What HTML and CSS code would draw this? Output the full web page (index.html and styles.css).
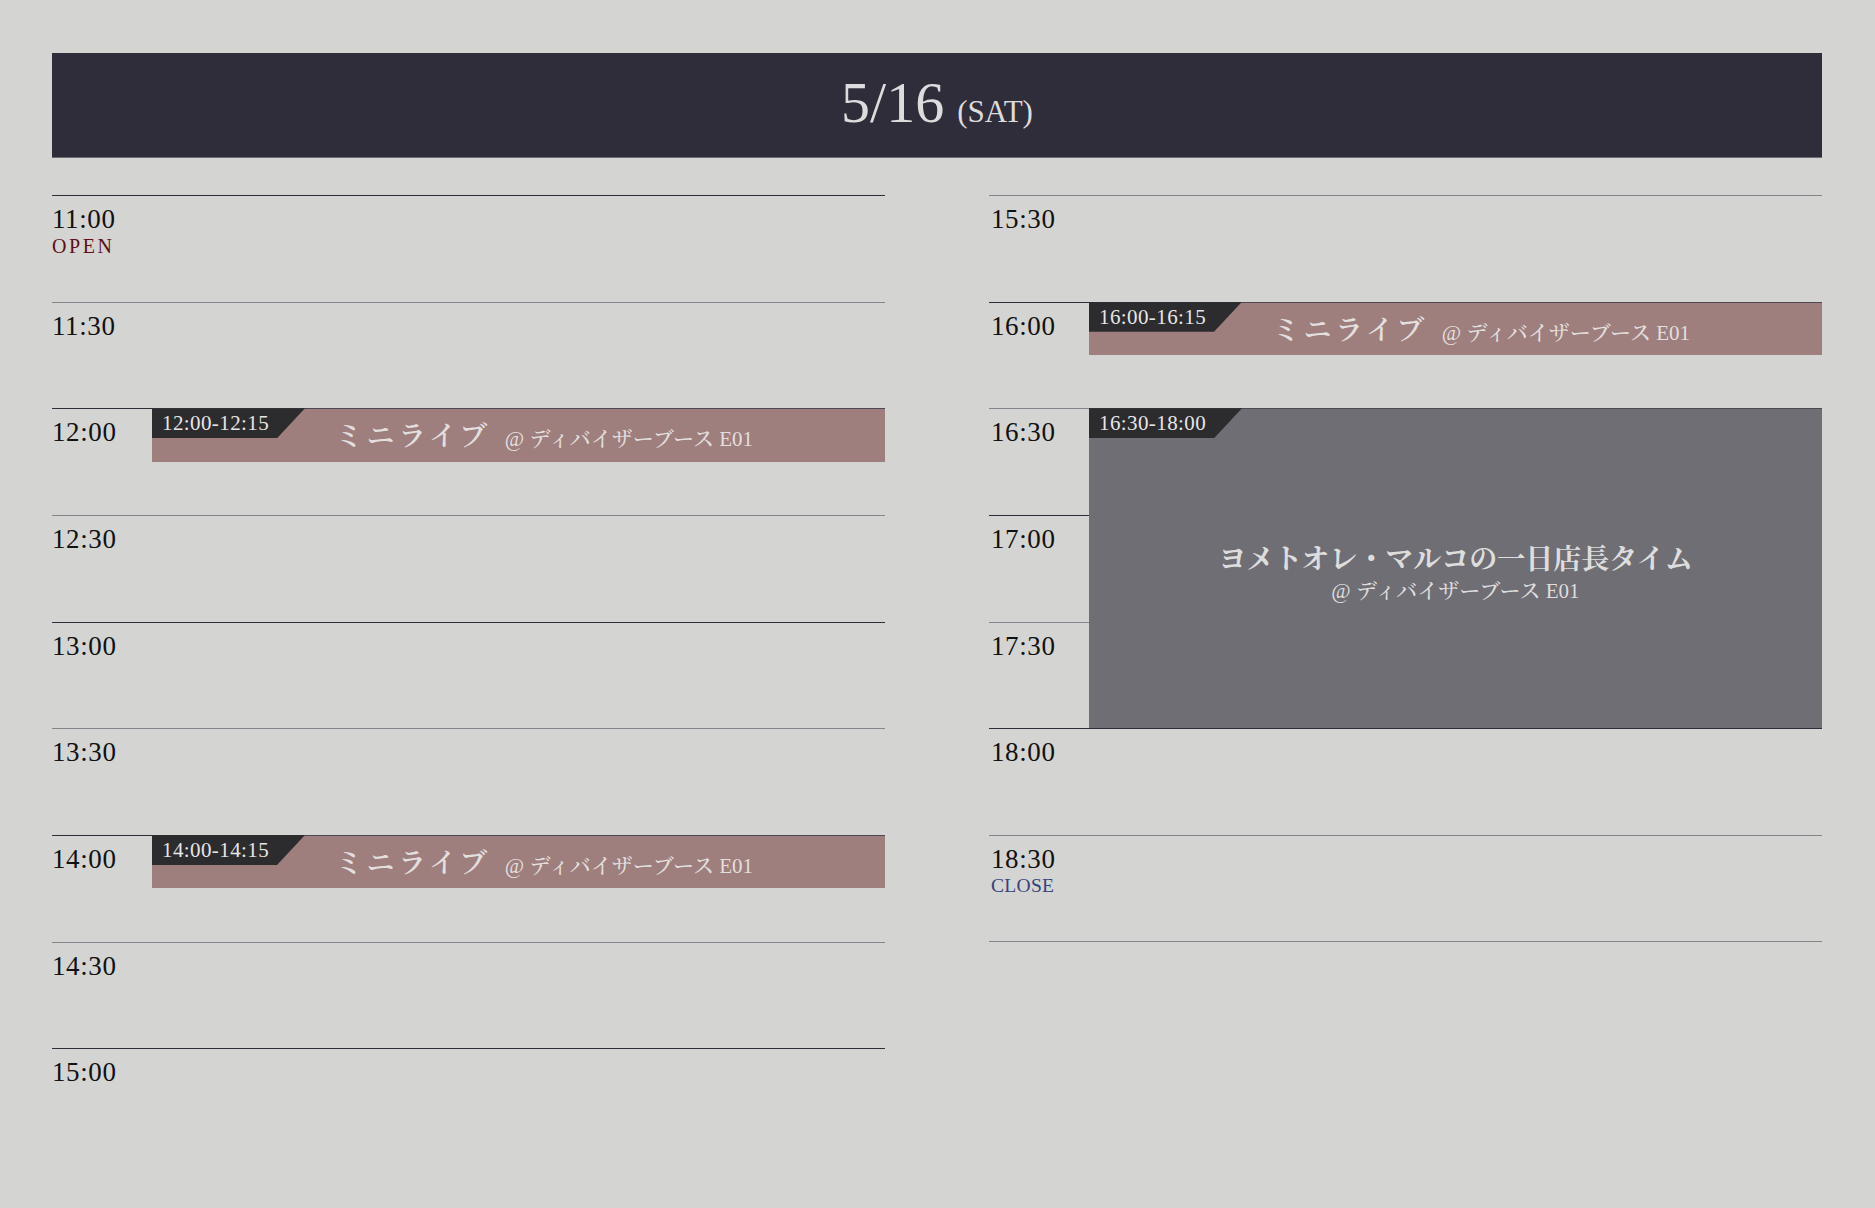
FILE: index.html
```html
<!DOCTYPE html>
<html lang="ja">
<head>
  <meta charset="UTF-8" />
  <meta name="viewport" content="width=device-width, initial-scale=1.0" />
  <title>5/16 タイムテーブル</title>
  <link rel="stylesheet" href="styles.css">
</head>
<body>
  <div class="page">
    <!-- Day header -->
    <header class="day-head">
      <span class="day-date">5/16</span><span class="day-week">(SAT)</span>
    </header>

    <div class="timetable">
      <!-- Left column: 11:00 - 15:00 -->
      <section class="col">
        <div class="slot hour">
          <div class="slot-label"><div class="slot-time">11:00</div><div class="slot-note open">OPEN</div></div>
          <div class="slot-lane"></div>
        </div>
        <div class="slot half">
          <div class="slot-label"><div class="slot-time">11:30</div></div>
          <div class="slot-lane"></div>
        </div>
        <div class="slot hour">
          <div class="slot-label"><div class="slot-time">12:00</div></div>
          <div class="slot-lane">
            <div class="event live">
              <div class="event-tag">12:00-12:15</div>
              <div class="event-body"><span class="event-title">ミニライブ</span><span class="event-place">@ ディバイザーブース E01</span></div>
            </div>
          </div>
        </div>
        <div class="slot half">
          <div class="slot-label"><div class="slot-time">12:30</div></div>
          <div class="slot-lane"></div>
        </div>
        <div class="slot hour">
          <div class="slot-label"><div class="slot-time">13:00</div></div>
          <div class="slot-lane"></div>
        </div>
        <div class="slot half">
          <div class="slot-label"><div class="slot-time">13:30</div></div>
          <div class="slot-lane"></div>
        </div>
        <div class="slot hour">
          <div class="slot-label"><div class="slot-time">14:00</div></div>
          <div class="slot-lane">
            <div class="event live">
              <div class="event-tag">14:00-14:15</div>
              <div class="event-body"><span class="event-title">ミニライブ</span><span class="event-place">@ ディバイザーブース E01</span></div>
            </div>
          </div>
        </div>
        <div class="slot half">
          <div class="slot-label"><div class="slot-time">14:30</div></div>
          <div class="slot-lane"></div>
        </div>
        <div class="slot hour">
          <div class="slot-label"><div class="slot-time">15:00</div></div>
          <div class="slot-lane"></div>
        </div>
      </section>

      <!-- Right column: 15:30 - 18:30 -->
      <section class="col">
        <div class="slot half">
          <div class="slot-label"><div class="slot-time">15:30</div></div>
          <div class="slot-lane"></div>
        </div>
        <div class="slot hour">
          <div class="slot-label"><div class="slot-time">16:00</div></div>
          <div class="slot-lane">
            <div class="event live">
              <div class="event-tag">16:00-16:15</div>
              <div class="event-body"><span class="event-title">ミニライブ</span><span class="event-place">@ ディバイザーブース E01</span></div>
            </div>
          </div>
        </div>
        <div class="slot half">
          <div class="slot-label"><div class="slot-time">16:30</div></div>
          <div class="slot-lane">
            <div class="event shop">
              <div class="event-tag">16:30-18:00</div>
              <div class="event-title">ヨメトオレ・マルコの一日店長タイム</div>
              <div class="event-place">@ ディバイザーブース E01</div>
            </div>
          </div>
        </div>
        <div class="slot hour">
          <div class="slot-label"><div class="slot-time">17:00</div></div>
          <div class="slot-lane"></div>
        </div>
        <div class="slot half">
          <div class="slot-label"><div class="slot-time">17:30</div></div>
          <div class="slot-lane"></div>
        </div>
        <div class="slot hour">
          <div class="slot-label"><div class="slot-time">18:00</div></div>
          <div class="slot-lane"></div>
        </div>
        <div class="slot half last">
          <div class="slot-label"><div class="slot-time">18:30</div><div class="slot-note close">CLOSE</div></div>
          <div class="slot-lane"></div>
        </div>
      </section>
    </div>
  </div>
</body>
</html>
```

FILE: styles.css
```css
/* Basic reset */
* {
  box-sizing: border-box;
  margin: 0;
  padding: 0;
}
body {
  background: #d4d4d2;
  color: #111;
  font-family: "Liberation Serif", "Noto Serif CJK JP", "Noto Sans CJK JP", serif;
}
.page {
  padding: 53px 53px 0 52px;
}
/* Header bar */
.day-head {
  height: 105px;
  background: #302d3b;
  border-bottom: 1px solid #6c6a72;
  color: #dddcdc;
  text-align: center;
  line-height: 100px;
  white-space: nowrap;
}
.day-date {
  font-size: 58px;
}
.day-week {
  font-size: 31px;
  margin-left: 13px;
}
/* Two columns of half-hour slots */
.timetable {
  display: grid;
  grid-template-columns: 1fr 1fr;
  column-gap: 104px;
  margin-top: 37px;
}
.slot {
  display: flex;
  height: 106.667px;
  border-top: 1px solid #2f2d38;
}
.slot.half {
  border-top-color: #86858b;
}
.slot.last {
  border-bottom: 1px solid #86858b;
}
.slot-label {
  width: 100px;
  flex-shrink: 0;
  padding-top: 8px;
}
.col + .col .slot-label {
  padding-left: 2px;
}
.slot-time {
  font-size: 27px;
  line-height: 30px;
  letter-spacing: 0.6px;
}
.slot-note {
  font-size: 20px;
  line-height: 22px;
  margin-top: 1px;
}
.slot-note.open {
  color: #5e0f18;
  letter-spacing: 2.6px;
}
.slot-note.close {
  color: #34437c;
  font-size: 19.5px;
  letter-spacing: 0.3px;
}
.slot-lane {
  flex: 1;
  min-width: 0;
}
/* Events overlap the slot lines below them */
.event {
  position: relative;
  z-index: 1;
  margin-top: -1px;
  border-top: 1px solid #4e4854;
  color: #e3dfde;
  white-space: nowrap;
}
.event-tag {
  position: absolute;
  left: 0;
  top: -1px;
  width: 153px;
  height: 30px;
  padding-left: 10px;
  background: #2c2b2e;
  clip-path: polygon(0 0, 100% 0, calc(100% - 28px) 100%, 0 100%);
  color: #e6e6e6;
  font-size: 21px;
  line-height: 30px;
  letter-spacing: 0.4px;
}
.event.live {
  height: 53.333px;
  background: #9e7f7e;
}
.event.live .event-body {
  padding-left: 183px;
  font-size: 28px;
  line-height: 56px;
}
.event.live .event-title {
  font-size: 28px;
  font-weight: 600;
  letter-spacing: 3.5px;
}
.event.live .event-place {
  font-size: 21px;
  font-weight: 500;
  margin-left: 14px;
}
.event.shop {
  height: 320px;
  background: #6f6e74;
  display: flex;
  flex-direction: column;
  justify-content: center;
  align-items: center;
  padding-top: 8px;
  color: #dedddd;
}
.event.shop .event-title {
  font-size: 28px;
  font-weight: 700;
  line-height: 36px;
}
.event.shop .event-place {
  font-size: 21px;
  font-weight: 500;
  line-height: 26px;
}
```
